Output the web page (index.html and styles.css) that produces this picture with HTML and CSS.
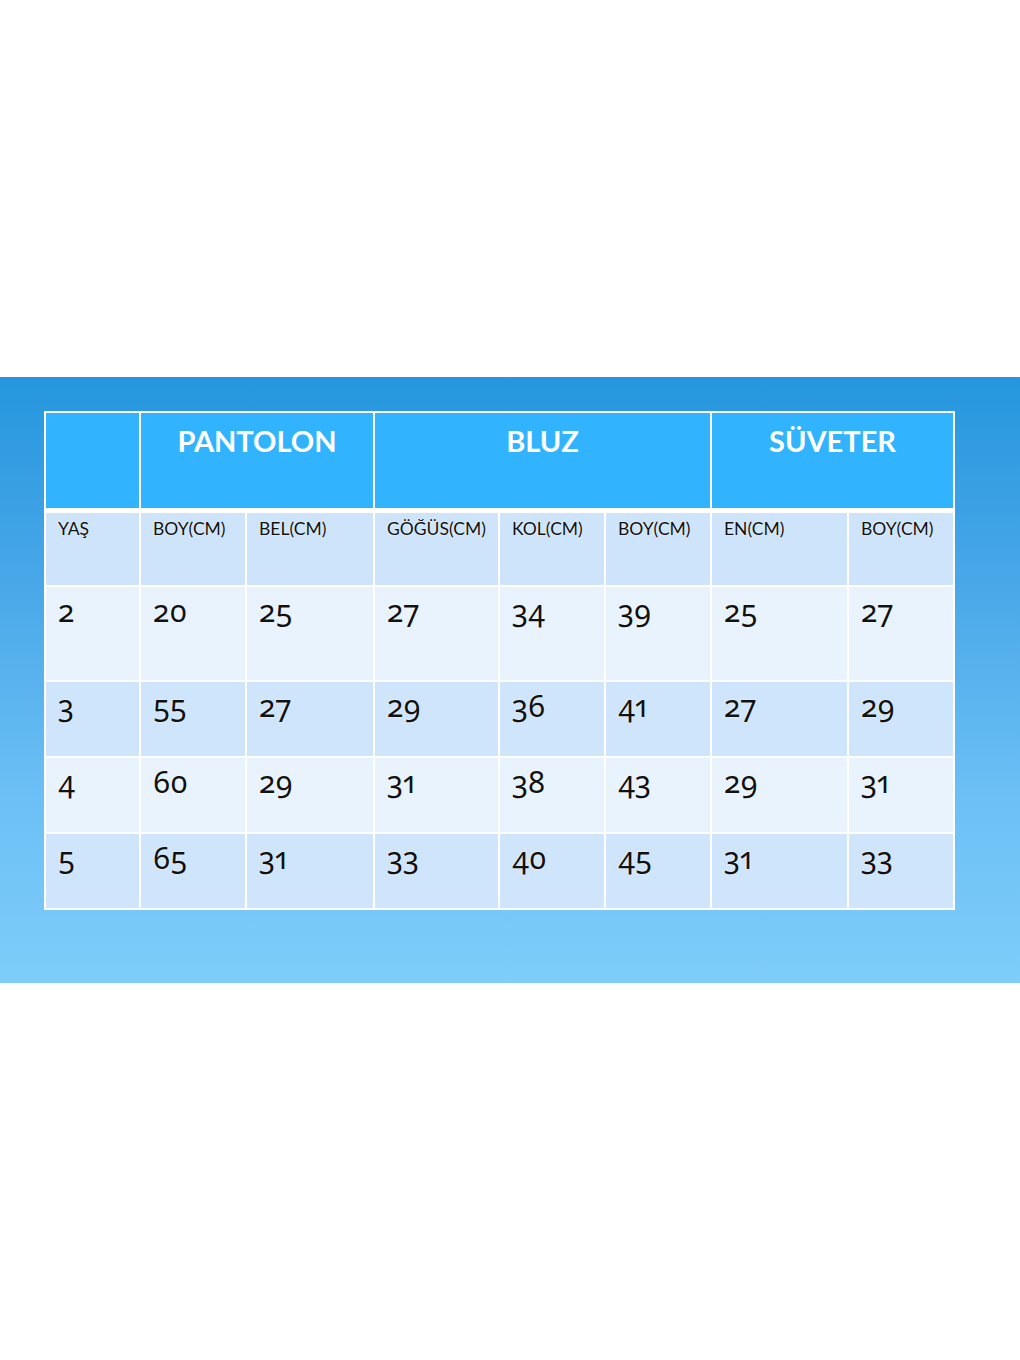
FILE: index.html
```html
<!DOCTYPE html>
<html lang="tr">
<head>
<meta charset="utf-8">
<title>Beden Tablosu</title>
<link rel="stylesheet" href="styles.css">
</head>
<body>
<div class="page">
  <section class="band">
    <table class="sizes">
      <colgroup>
        <col class="c-yas">
        <col class="c-106">
        <col class="c-128">
        <col class="c-125">
        <col class="c-106">
        <col class="c-106">
        <col class="c-137">
        <col class="c-106">
      </colgroup>
      <thead>
        <tr class="group-row">
          <th></th>
          <th colspan="2">PANTOLON</th>
          <th colspan="3">BLUZ</th>
          <th colspan="2">SÜVETER</th>
        </tr>
        <tr class="label-row">
          <th>YAŞ</th>
          <th>BOY(CM)</th>
          <th>BEL(CM)</th>
          <th>GÖĞÜS(CM)</th>
          <th>KOL(CM)</th>
          <th>BOY(CM)</th>
          <th>EN(CM)</th>
          <th>BOY(CM)</th>
        </tr>
      </thead>
      <tbody>
        <tr class="light r1">
          <td>2</td><td>20</td><td>25</td><td>27</td><td>34</td><td>39</td><td>25</td><td>27</td>
        </tr>
        <tr class="mid r2">
          <td>3</td><td>55</td><td>27</td><td>29</td><td>36</td><td>41</td><td>27</td><td>29</td>
        </tr>
        <tr class="light r3">
          <td>4</td><td>60</td><td>29</td><td>31</td><td>38</td><td>43</td><td>29</td><td>31</td>
        </tr>
        <tr class="mid r4">
          <td>5</td><td>65</td><td>31</td><td>33</td><td>40</td><td>45</td><td>31</td><td>33</td>
        </tr>
      </tbody>
    </table>
  </section>
</div>
</body>
</html>
```

FILE: styles.css
```css
html, body {
  margin: 0;
  padding: 0;
  background: #ffffff;
}

.page {
  padding-top: 377px;
  font-family: Lato, "Open Sans", "Noto Sans", sans-serif;
}

.band {
  height: 606px;
  box-sizing: border-box;
  padding: 34px 0 0 44px;
  background: linear-gradient(to bottom, #2596de 0%, #4aa8e8 35%, #6cc0f5 70%, #7ecdfa 100%);
}

.sizes {
  border-collapse: collapse;
  table-layout: fixed;
  width: 910px;
  border: 2px solid #ffffff;
}

.c-yas { width: 95px; }
.c-106 { width: 106px; }
.c-128 { width: 128px; }
.c-125 { width: 125px; }
.c-137 { width: 137px; }

.sizes th,
.sizes td {
  border: 2px solid #ffffff;
  padding: 0;
  vertical-align: top;
  text-align: left;
  color: #111111;
  text-shadow: 0 0 2px rgba(255, 255, 255, 0.9);
}

.group-row th {
  height: 98px;
  background: #31b4fd;
  color: #ffffff;
  text-shadow: none;
  text-align: center;
  font-weight: 700;
  font-size: 29px;
  line-height: 1.2;
  padding-top: 11px;
  box-sizing: border-box;
  border-bottom: 5px solid #ffffff;
}

.label-row th {
  height: 76px;
  background: #cde4fb;
  font-weight: 400;
  font-size: 17.5px;
  line-height: 1.2;
  padding: 5px 0 0 12px;
  box-sizing: border-box;
}

.sizes td {
  font-family: "Noto Sans", Lato, sans-serif;
  font-size: 30px;
  line-height: 1.2;
  padding: 6px 0 0 12px;
  box-sizing: border-box;
  font-variant-numeric: oldstyle-nums proportional-nums;
}

.light td { background: #e8f3fe; }
.mid td { background: #cfe5fb; }

.r1 td { height: 95px; }
.r2 td { height: 76px; }
.r3 td { height: 76px; }
.r4 td { height: 76px; }
```
